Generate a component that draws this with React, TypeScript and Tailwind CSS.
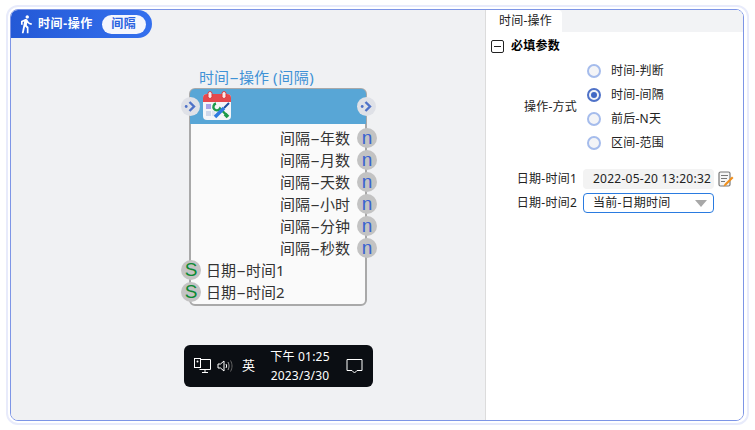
import { MdDirectionsWalk } from "react-icons/md";

const FONT = "font-['Noto_Sans','Noto_Sans_CJK_SC',sans-serif]";

const intervals = ["间隔-年数", "间隔-月数", "间隔-天数", "间隔-小时", "间隔-分钟", "间隔-秒数"];
const dates = ["日期-时间1", "日期-时间2"];
const modes = [
  { label: "时间-判断", checked: false },
  { label: "时间-间隔", checked: true },
  { label: "前后-N天", checked: false },
  { label: "区间-范围", checked: false },
];

// node labels have a long thin dash in the picture
function Dashed({ text }: { text: string }) {
  const [a, b] = text.split("-");
  return (
    <>
      {a}
      <span className="inline-block w-[10px] scale-x-[2] text-center">-</span>
      {b}
    </>
  );
}

function CalendarTools() {
  return (
    <svg width="30" height="30" viewBox="0 0 30 30">
      <rect x="1" y="3" width="28" height="26" rx="4" fill="#f4f5f8" />
      <path d="M1 11V7a4 4 0 0 1 4-4h20a4 4 0 0 1 4 4v4z" fill="#e5484d" />
      <rect x="6" y="0.5" width="4" height="7" rx="2" fill="#fbeaea" stroke="#d93a3f" />
      <rect x="20" y="0.5" width="4" height="7" rx="2" fill="#fbeaea" stroke="#d93a3f" />
      <rect x="4" y="13" width="5" height="5" fill="#a9a3e8" />
      <rect x="4" y="20" width="5" height="5" fill="#cfd8ea" />
      <rect x="10" y="20" width="3" height="5" fill="#dfe4ef" />
      <path d="M14 12.500a3.500 3.500 0 1 0 4 5l7 7" fill="none" stroke="#1f9a4a" strokeWidth="2.400" />
      <path d="M27 12l-5 5" stroke="#1d4f9e" strokeWidth="2" />
      <path d="M22 17l-9 9" stroke="#2f7ae0" strokeWidth="3.600" />
      <path d="M23 23l3 3" stroke="#1f9a4a" strokeWidth="3.800" />
    </svg>
  );
}

function ArrowPort() {
  return (
    <div className="flex h-[19px] w-[19px] items-center justify-center rounded-full bg-[#dfe1e7]">
      <svg width="13" height="13" viewBox="0 0 13 13">
        <circle cx="2.200" cy="6.500" r="1.400" fill="#4f72c8" />
        <path d="M5.500 2l4.500 4.500L5.500 11" fill="none" stroke="#4f72c8" strokeWidth="2.400" />
      </svg>
    </div>
  );
}

function LetterPort({ letter, color }: { letter: string; color: string }) {
  return (
    <div className={`flex h-[20px] w-[20px] items-center justify-center rounded-full bg-[#c3c3c3] pb-[2px] font-['Liberation_Sans',sans-serif] text-[19px] leading-none ${color}`}>
      {letter}
    </div>
  );
}

function Node() {
  return (
    <div className="relative ml-[178px] mt-[30px] w-[178px]">
      <div className="mb-[2px] ml-[10px] whitespace-nowrap text-[15px] leading-[18px] text-[#3f92d6]">
        <Dashed text="时间-操作" />
        <span className="ml-[4px] tracking-[0.6px]">(间隔)</span>
      </div>
      <div className="relative h-[218px] rounded-[6px] border-2 border-[#a9a9a9] bg-[#fafafa]">
        <div className="-mx-[1px] -mt-[1px] h-[35px] rounded-t-[5px] bg-[#58a6d6] pl-[12px] pt-[2px]">
          <CalendarTools />
        </div>
        <div className="absolute -left-[10px] top-[7px]"><ArrowPort /></div>
        <div className="absolute -right-[11px] top-[7px]"><ArrowPort /></div>
        <div className="pt-[3px]">
          {intervals.map((t) => (
            <div key={t} className="relative h-[22px] whitespace-nowrap pr-[15px] text-right text-[15px] leading-[22px] text-[#333]">
              <Dashed text={t} />
              <div className="absolute -right-[12px] top-[1px]"><LetterPort letter="n" color="text-[#3862d0]" /></div>
            </div>
          ))}
          {dates.map((t) => (
            <div key={t} className="relative h-[22px] whitespace-nowrap pl-[15px] text-[15px] leading-[22px] text-[#333]">
              <Dashed text={t} />
              <div className="absolute -left-[10px] top-[1px]"><LetterPort letter="S" color="text-[#0c8a34]" /></div>
            </div>
          ))}
        </div>
      </div>
    </div>
  );
}

function Taskbar() {
  return (
    <div className="ml-[173px] mt-[39px] flex h-[42px] w-[189px] items-center rounded-[6px] bg-[#0b0e13] pl-[10px] text-white">
      <svg width="17" height="16" viewBox="0 0 17 16" fill="none" stroke="#fff">
        <path d="M5.500 1.500h11v10h-11M8 14.500h6M11 11.500v3" />
        <rect x="0.500" y="0.500" width="6" height="9" fill="#0b0e13" />
        <circle cx="3.500" cy="3.500" r="1" fill="#fff" stroke="none" />
      </svg>
      <svg className="ml-[6px]" width="17" height="16" viewBox="0 0 17 16" fill="none" stroke="#fff">
        <path d="M1 6h2.500L7 3v10l-3.500-3H1z" />
        <path d="M9 6c.8 1.200.8 2.800 0 4" />
        <path d="M11 4c1.400 2.500 1.400 5.500 0 8" stroke="#999" />
        <path d="M13.500 2.500c2 3.500 2 7.500 0 11" stroke="#666" />
      </svg>
      <span className="ml-[8px] text-[13px]">英</span>
      <div className="ml-[15px] w-[60px] whitespace-nowrap text-center text-[12px] leading-[19px] tracking-[0.2px]">
        <div>下午 01:25</div>
        <div>2023/3/30</div>
      </div>
      <svg className="ml-[16px]" width="17" height="17" viewBox="0 0 17 17" fill="none" stroke="#fff">
        <path d="M1 1.500h15v11h-5l-2.500 2.500L6 12.500H1z" />
      </svg>
    </div>
  );
}

function EditIcon() {
  return (
    <svg className="ml-[4px]" width="16" height="17" viewBox="0 0 16 17">
      <rect x="1" y="1" width="11" height="14" rx="1.500" fill="#f5f5f5" stroke="#777" strokeWidth="1.200" />
      <path d="M3 4.500h7M3 7.500h6M3 10.500h4" stroke="#777" />
      <path d="M14 5.500l1.500 1.500L8 14.500l-2.500 1 1-2.500z" fill="#ef8f1c" />
    </svg>
  );
}

function Form() {
  return (
    <div className="px-[5px] text-[12px] tracking-[0.25px] text-[#222]">
      <div className="flex h-[26px] items-center pt-[2px]">
        <div className="flex h-[13px] w-[13px] items-center justify-center rounded-[2px] border border-[#222]">
          <div className="h-px w-[7px] bg-[#222]" />
        </div>
        <span className="ml-[7px] font-bold text-black">必填参数</span>
      </div>
      <div className="flex items-center">
        <div className="w-[86px] whitespace-nowrap text-right">操作-方式</div>
        <div className="ml-[10px] mt-[1px]">
          {modes.map((m) => (
            <div key={m.label} className="flex h-[24px] items-center">
              <div className={`flex h-[14px] w-[14px] items-center justify-center rounded-full border-2 bg-[#f3f4f7] ${m.checked ? "border-[#4f72c8]" : "border-[#a5bcec]"}`}>
                {m.checked && <div className="h-[6px] w-[6px] rounded-full bg-[#4168c4]" />}
              </div>
              <span className="ml-[10px]">{m.label}</span>
            </div>
          ))}
        </div>
      </div>
      <div className="mt-[14px] flex items-center">
        <div className="w-[86px] text-right">日期-时间1</div>
        <div className="ml-[6px] flex h-[20px] w-[131px] items-center whitespace-nowrap rounded-[4px] bg-[#f3f3f3] pl-[10px]">2022-05-20 13:20:32</div>
        <EditIcon />
      </div>
      <div className="mt-[4px] flex items-center">
        <div className="w-[86px] text-right">日期-时间2</div>
        <div className="ml-[6px] flex h-[20px] w-[131px] items-center justify-between rounded-[4px] border border-[#2a7be0] pl-[9px] pr-[6px]">
          <span>当前-日期时间</span>
          <div className="h-0 w-0 border-x-[6px] border-t-[7px] border-x-transparent border-t-[#a8a8a8]" />
        </div>
      </div>
    </div>
  );
}

export default function App() {
  return (
    <div className={`h-[430px] w-[755px] overflow-hidden bg-white pl-[6px] pr-[6px] pt-[5px] ${FONT}`}>
      <div className="h-[420px] rounded-[12px] border-2 border-[#e8ebfb] py-[2px] pl-[2px] pr-[3px]">
        <div className="flex h-full overflow-hidden rounded-[8px] border border-[#7d95e6]">
          <div className="w-[474px] bg-[#f0f1f3]">
            <div className="flex h-[28px] w-[141px] items-center rounded-br-[14px] rounded-tr-[14px] bg-linear-to-r from-[#2459d6] to-[#3470ee] pl-[5px] text-[12px] font-bold tracking-[0.6px] text-white">
              <MdDirectionsWalk className="h-[20px] w-[20px]" />
              <span className="ml-[2px] whitespace-nowrap">时间-操作</span>
              <span className="ml-[9px] flex h-[19px] w-[44px] items-center justify-center rounded-full bg-[#f4f6fd] text-[#2a62e0]">间隔</span>
            </div>
            <Node />
            <Taskbar />
          </div>
          <div className="flex-1 border-l border-[#dcdcdc] bg-white">
            <div className="flex h-[22px] bg-[#f2f3f5]">
              <div className="w-[76px] rounded-tr-[4px] bg-white pl-[13px] text-[12px] leading-[22px] tracking-[0.25px] text-[#222]">时间-操作</div>
            </div>
            <Form />
          </div>
        </div>
      </div>
    </div>
  );
}
